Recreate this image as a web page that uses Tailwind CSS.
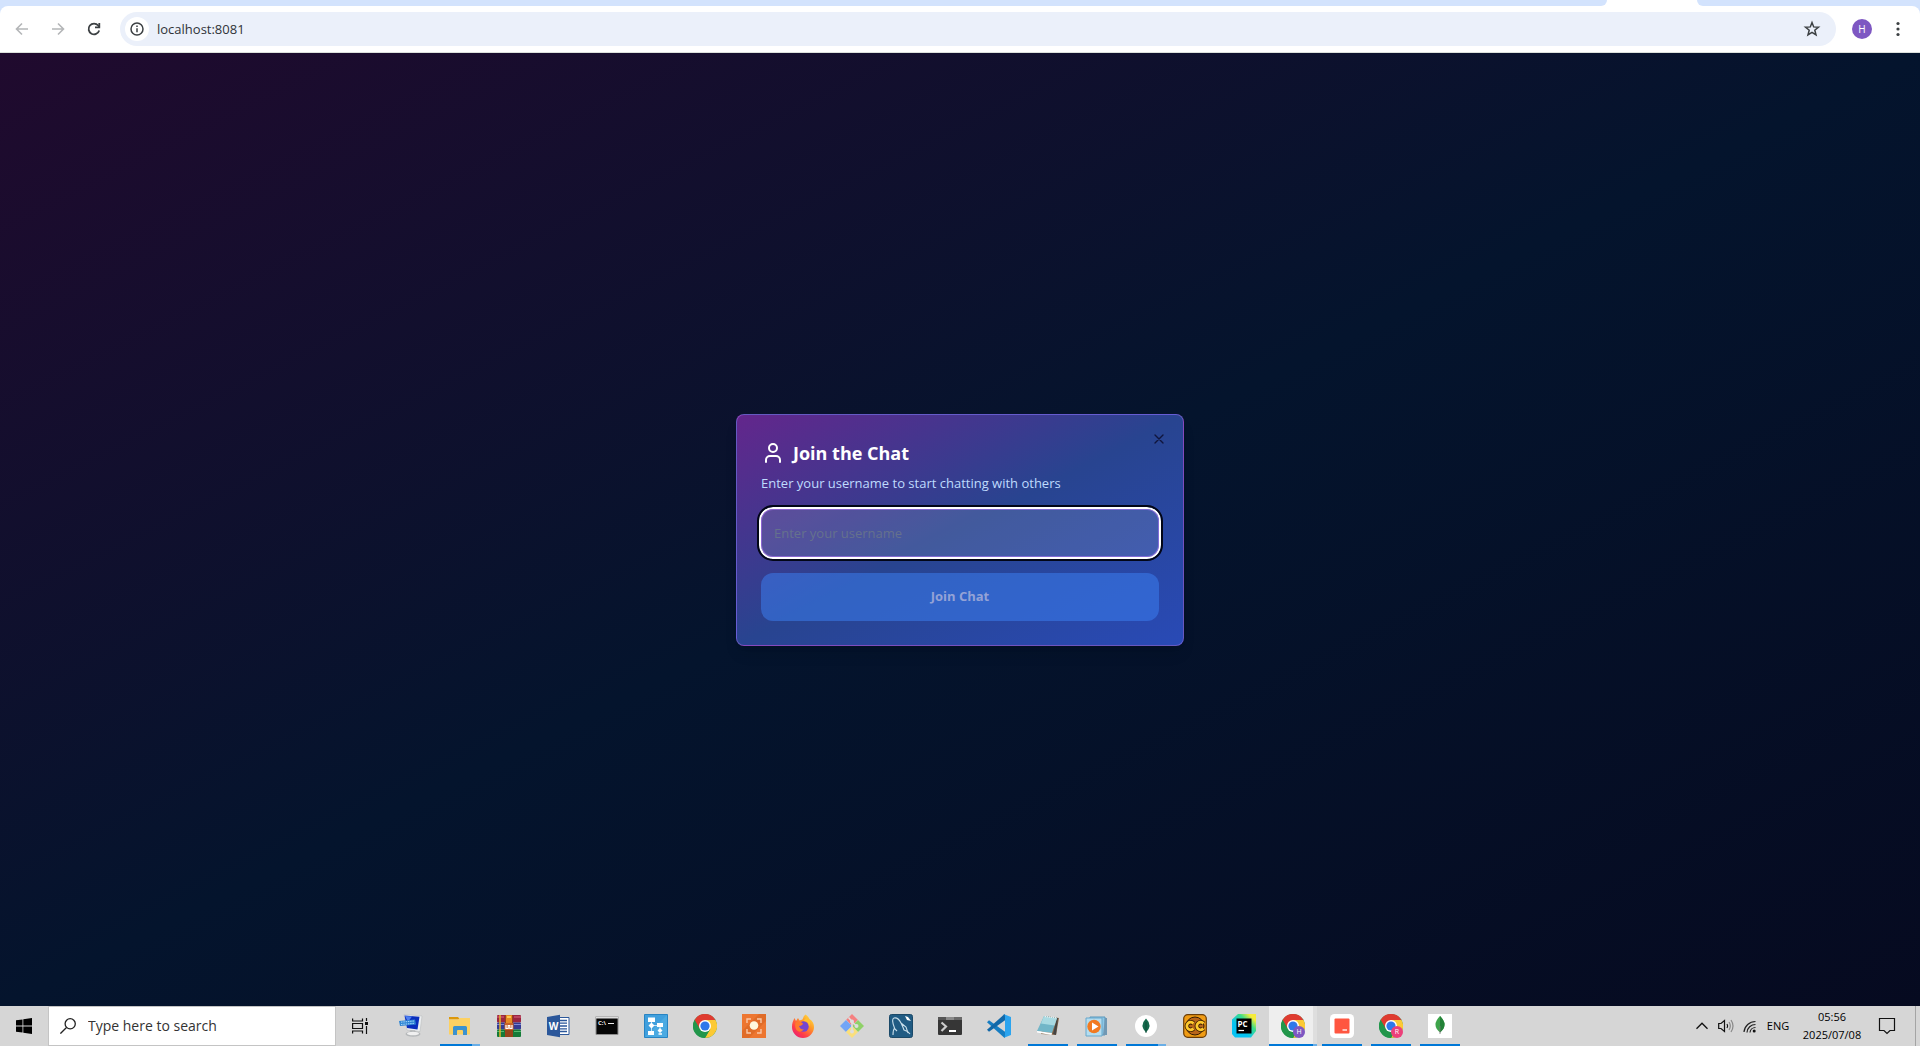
<!DOCTYPE html>
<html lang="en" class="h-full overflow-hidden">
<head>
<meta charset="utf-8">
<meta name="viewport" content="width=device-width, initial-scale=1">
<title>Join the Chat</title>
<script src="https://cdn.jsdelivr.net/npm/@tailwindcss/browser@4"></script>
</head>
<body class="flex h-full flex-col overflow-hidden bg-white font-['Segoe_UI','Open_Sans',sans-serif]">

<!-- Shared symbols -->
<svg class="hidden" aria-hidden="true">
  <symbol id="chrome" viewBox="0 0 24 24">
    <circle cx="12" cy="12" r="12" fill="#1e9d50"/>
    <path d="M12 12 1.6 6A12 12 0 0 1 22.4 6Z" fill="#df3b30"/>
    <path d="M12 6h10.4A12 12 0 0 1 12 24l5.2-9Z" fill="#fcc934"/>
    <path d="M1.6 6 6.8 15 12 12V6Z" fill="#df3b30"/>
    <path d="M1.6 6A12 12 0 0 0 12 24l5.2-9L12 12 6.8 15Z" fill="#22964b"/>
    <circle cx="12" cy="12" r="6" fill="#fff"/>
    <circle cx="12" cy="12" r="4.6" fill="#2f78ea"/>
  </symbol>
</svg>

<!-- Browser chrome -->
<header class="shrink-0 bg-[#d3e3fd] pt-[6px]">
  <nav class="relative flex h-[47px] items-center rounded-t-lg border-b border-[#dce1dc] bg-white pr-3 pl-3">
    <div class="absolute -top-[6px] right-[215px] flex h-[6px] w-[106px] justify-between bg-white">
      <span class="h-full w-2 rounded-br-lg bg-[#d3e3fd]"></span>
      <span class="h-full w-2 rounded-bl-lg bg-[#d3e3fd]"></span>
    </div>
    <button aria-label="Back" class="flex size-5 items-center justify-center text-[#b4b6b8]">
      <svg class="size-5" viewBox="0 0 20 20" fill="none" stroke="currentColor" stroke-width="1.6"><path d="M16 10H5M10 4.500 4.500 10l5.500 5.500"/></svg>
    </button>
    <button aria-label="Forward" class="ml-4 flex size-5 items-center justify-center text-[#b4b6b8]">
      <svg class="size-5" viewBox="0 0 20 20" fill="none" stroke="currentColor" stroke-width="1.6"><path d="M4 10h11M10 4.500l5.500 5.500-5.500 5.500"/></svg>
    </button>
    <button aria-label="Reload" class="ml-4 flex size-5 items-center justify-center text-[#3c4043]">
      <svg class="size-5" viewBox="0 0 20 20" fill="none" stroke="currentColor" stroke-width="1.8"><path d="M15.200 11.500A5.400 5.400 0 1 1 14.200 6.500L15.500 8"/><path d="M15.300 4v4.300H11"/></svg>
    </button>
    <div class="ml-4 flex h-[34px] flex-1 items-center rounded-full bg-[#ebf0fa] pr-[14px] pl-[5px]">
      <button aria-label="Site information" class="flex size-6 items-center justify-center rounded-full bg-white text-[#3c4043]">
        <svg class="size-4" viewBox="0 0 16 16" fill="none" stroke="currentColor" stroke-width="1.5"><circle cx="8" cy="8" r="6"/><path d="M8 7.300V11.300M8 4.500v1.600"/></svg>
      </button>
      <input aria-label="Address" value="localhost:8081" class="ml-2 h-6 min-w-0 flex-1 bg-transparent text-[13px] text-[#303338] outline-none">
      <button aria-label="Bookmark" class="flex size-5 items-center justify-center text-[#3c4043]">
        <svg class="size-5" viewBox="0 0 20 20" fill="none" stroke="currentColor" stroke-width="1.500"><path d="m10 3.500 1.700 4.400 4.800.3-3.700 3 1.200 4.700-4-2.600-4 2.600 1.200-4.700-3.700-3 4.800-.3Z"/></svg>
      </button>
    </div>
    <button aria-label="Profile" class="ml-4 size-5 rounded-full bg-[#7e57c2] text-center text-[10px] leading-5 text-white">H</button>
    <button aria-label="Menu" class="ml-4 flex size-5 items-center justify-center text-[#3c4043]">
      <svg class="size-5" viewBox="0 0 20 20" fill="currentColor"><circle cx="10" cy="4.500" r="1.600"/><circle cx="10" cy="10" r="1.600"/><circle cx="10" cy="15.500" r="1.600"/></svg>
    </button>
  </nav>
</header>

<!-- Chat page -->
<main class="flex min-h-0 flex-1 items-center justify-center bg-linear-to-br/srgb from-[#200a2e] via-[#04142d] to-[#060a20] p-4">
  <section role="dialog" aria-labelledby="title" aria-describedby="desc" class="relative w-full max-w-md rounded-lg border border-purple-400/40 bg-linear-to-br/srgb from-[#63268c] via-[#284490] to-[#294ab6] p-6 shadow-lg">
    <h2 id="title" class="flex h-7 items-center gap-2 text-lg font-bold text-white">
      <svg class="size-6" viewBox="0 0 24 24" fill="none" stroke="currentColor" stroke-width="2" stroke-linecap="round" stroke-linejoin="round"><path d="M19 21v-2a4 4 0 0 0-4-4H9a4 4 0 0 0-4 4v2"/><circle cx="12" cy="7" r="4"/></svg>
      Join the Chat
    </h2>
    <p id="desc" class="mt-[6px] text-[13px] leading-5 text-[#bfdbfe]">Enter your username to start chatting with others</p>
    <form class="mt-4 flex flex-col gap-4">
      <input aria-label="Username" placeholder="Enter your username" class="h-12 w-full rounded-xl border border-purple-400/50 bg-white/12 px-3 text-[13px] text-white ring-2 ring-white outline-2 outline-offset-2 outline-[#020617] placeholder:text-[#65718d]">
      <button type="button" disabled class="h-12 w-full rounded-xl bg-[#3b82f6]/50 text-[13px] font-bold text-[#94a2d6]">Join Chat</button>
    </form>
    <button aria-label="Close" class="absolute top-4 right-4 text-[#10153c]">
      <svg class="size-4" viewBox="0 0 24 24" fill="none" stroke="currentColor" stroke-width="2" stroke-linecap="round"><path d="M18 6 6 18M6 6l12 12"/></svg>
    </button>
  </section>
</main>

<!-- Taskbar -->
<footer class="flex h-10 shrink-0 items-stretch overflow-hidden bg-[#d6d6d6] text-black">
  <button aria-label="Start" class="flex w-12 items-center justify-center">
    <svg class="size-4" viewBox="0 0 16 16"><path d="M0 2.300 6.500 1.400V7.600H0ZM7.300 1.300 16 0V7.600H7.300ZM0 8.400h6.500v6.200L0 13.700ZM7.300 8.400H16V16L7.300 14.700Z"/></svg>
  </button>
  <label class="flex w-[288px] items-center gap-3 border border-[#c4c4c4] bg-white pl-[11px]">
    <svg class="size-4" viewBox="0 0 16 16" fill="none" stroke="#222" stroke-width="1.300"><circle cx="10.200" cy="5.800" r="5.100"/><path d="M6.500 9.500.400 15.600"/></svg>
    <input aria-label="Search" placeholder="Type here to search" class="min-w-0 flex-1 bg-transparent text-sm outline-none placeholder:text-[#333]">
  </label>
  <button aria-label="Task view" class="flex w-12 items-center justify-center">
    <svg class="size-4" viewBox="0 0 16 16" fill="none" stroke="#111" stroke-width="1.200"><path d="M.600.500V3H10.500V.500M.600 5.500h9.900v5H.600ZM.600 15.500V13H10.500v2.500M14.500 0v3M14.500 8v8"/><path d="M13 4h3v3h-3Z" fill="#111" stroke="none"/></svg>
  </button>

  <div class="ml-[3px] flex gap-px">
    <button aria-label="On-screen keyboard" class="flex w-12 items-center justify-center">
      <svg class="size-6" viewBox="0 0 24 24"><path d="M5 .500 23 2 21 17.500 8 16Z" fill="#eceef0" stroke="#b5b8bb" stroke-width=".5"/><path d="M5.500 1.500 20.500 2.800 18.500 15.500 8 14Z" fill="#0b2fbd"/><path d="M6 2 13 2.500 9 8Z" fill="#4d7ff0"/><path d="M11 16.500h5l1 3h-5Z" fill="#aaadb0"/><ellipse cx="14" cy="20" rx="7.500" ry="2.800" fill="#b5b8ba"/><ellipse cx="14" cy="19.500" rx="6" ry="1.700" fill="#f0f0f0"/><path d="M0 7 16 5.500 17 10.500 1 12Z" fill="#2f86d4"/><path d="M2 8.200 15 7M2 10.500 15.500 9.300" stroke="#a5d5fa" stroke-width="1" stroke-dasharray="1.500 .8"/></svg>
    </button>
    <button aria-label="File Explorer" class="relative flex w-12 items-center justify-center">
      <svg class="size-6" viewBox="0 0 24 24"><path d="M1 3h9l2 2.500H1Z" fill="#dc980c"/><path d="M1 5.500h9l2-1.500h10v16.500H1Z" fill="#fdd162"/><path d="M5 21v-7.500q0-1.500 1.500-1.500h11q1.500 0 1.500 1.500V21h-4v-4q0-1-1-1h-4q-1 0-1 1v4Z" fill="#3c92cf"/></svg>
      <span class="absolute bottom-0 left-1 flex h-[2px] w-10 bg-[#0078d7]"><span class="ml-auto w-2 bg-[#6aaee6]"></span></span>
    </button>
    <button aria-label="WinRAR" class="flex w-12 items-center justify-center">
      <svg class="size-6" viewBox="0 0 24 24"><rect y="1" width="24" height="7.500" rx="1" fill="#9b2540"/><rect y="8.500" width="24" height="7" rx="1" fill="#343b94"/><rect y="15.500" width="24" height="7.500" rx="1" fill="#157a38"/><path d="M0 3h7M17 3h7" stroke="#db657c"/><path d="M0 10.500h7M17 10.500h7" stroke="#7f89d5"/><path d="M0 17.500h7M17 17.500h7" stroke="#56bb71"/><path d="M3 1v22" stroke="#e4b32b" stroke-width="1.500"/><path d="M8 1h8v22H8Z" fill="#97431a"/><path d="M9 1h6v8H9Z" fill="#e68a24"/><path d="M10 2h4v2h-4Z" fill="#ffc84c"/><path d="M7.500 9h9v7h-9Z" fill="#ca6328"/><path d="M9 11v3.500h2.200V11.500h1.600v3H15V11" fill="none" stroke="#fff" stroke-width="1.200"/></svg>
    </button>
    <button aria-label="Word" class="flex w-12 items-center justify-center">
      <svg class="size-6" viewBox="0 0 24 24"><path d="M12 3.500h11v17H12Z" fill="#fff" stroke="#2b579a"/><path d="M14 6.500h7M14 9.200h7M14 12h7M14 14.800h7M14 17.500h7" stroke="#2b579a" stroke-width="1.300"/><path d="M1 3 14 .800v22.400L1 21Z" fill="#2b579a"/><text x="7.500" y="15.500" text-anchor="middle" font-size="10" font-weight="700" fill="#fff">W</text></svg>
    </button>
    <button aria-label="Command Prompt" class="flex w-12 items-center justify-center">
      <svg class="size-6" viewBox="0 0 24 24"><path d="M1 2.500h22v18H1Z" fill="#060606" stroke="#8d8d8d"/><path d="M1 2.500h22v2H1Z" fill="#ddd"/><text x="3" y="11" font-size="6" font-weight="700" fill="#eee">C:\</text><path d="M13 9.500h6" stroke="#eee"/></svg>
    </button>
    <button aria-label="Diagram tool" class="flex w-12 items-center justify-center">
      <svg class="size-6" viewBox="0 0 24 24"><path d="M.500.500h23v23H.500Z" fill="#409fdd" stroke="#2884c3"/><path d="M23 1v22H1Z" fill="#5dbbeb" opacity=".4"/><path d="M4 3.500h7v4.500H4ZM13 9h6v4h-6ZM4 17h6v4H4Z" fill="#fff"/><path d="m7.500 8.500 3 3-3 3-3-3ZM16 14l2.500 2.500L16 19l-2.500-2.500Z" fill="#fff"/><path d="M7.500 8v9M10 11.500h3M16 13v2" stroke="#fff" stroke-width=".7"/><path d="M14.500 20h3.500" stroke="#fff" stroke-width="1.500"/></svg>
    </button>
    <button aria-label="Chrome" class="flex w-12 items-center justify-center"><svg class="size-6"><use href="#chrome"/></svg></button>
    <button aria-label="Screen capture" class="flex w-12 items-center justify-center">
      <svg class="size-6" viewBox="0 0 24 24"><path d="M0 0h24v24H0Z" fill="#ed7630"/><path d="M0 17 17 0h7v7L7 24H0Z" fill="#d66423" opacity=".55"/><path d="M5 9V5h4M15 5h4v4M19 15v4h-4M9 19H5v-4" fill="none" stroke="#f9c7a6" stroke-width="1.400"/><circle cx="12" cy="11.500" r="4.300" fill="#fff9dd"/></svg>
    </button>
    <button aria-label="Firefox" class="flex w-12 items-center justify-center">
      <svg class="size-6" viewBox="0 0 24 24"><defs><linearGradient id="ff" x1="1" y1="0" x2=".2" y2="1"><stop stop-color="#fff34d"/><stop offset=".4" stop-color="#ff9a28"/><stop offset=".75" stop-color="#ff3f47"/><stop offset="1" stop-color="#e91e73"/></linearGradient></defs><path d="M14.500.500c3 2 3.500 3.500 4 4.500 3.500 2 4.500 5 4.500 8A11 11 0 0 1 1 13c0-4 1.200-6.500 2.500-9l1.500 3 2-3 1.500 2.500 3-1C12.500 3 13 1.500 14.500.500Z" fill="url(#ff)"/><circle cx="12.500" cy="12.500" r="5.200" fill="#7545d1"/><path d="M4.500 8.500q5-2 7.500 1-.5 2-4 2.500 1.500 4 5 3.500-4 4-7.500.5Q3.500 13 4.500 8.500Z" fill="#ff7a2c"/><path d="M12 7q6-1 6 6 3-6-2.500-9Z" fill="#ffc22f"/></svg>
    </button>
    <button aria-label="Git" class="flex w-12 items-center justify-center">
      <svg class="size-6" viewBox="0 0 24 24"><path d="m12 0 5.800 5.800L12 12 6.200 5.800Z" fill="#f58080"/><path d="m0 12 6-6 6 6-6 6Z" fill="#72a5f6"/><path d="m12 12 6-6 6 6-6 6Z" fill="#8fd168"/><path d="m12 12 6 6-6 6-6-6Z" fill="#fadf7c"/><path d="m8.500 3.500 3.500 4v11M12 8l4.500 4" stroke="#dedede" stroke-width="1.600" fill="none"/><g fill="#dedede"><circle cx="12" cy="7.500" r="2"/><circle cx="16.500" cy="12" r="2"/><circle cx="12" cy="17.500" r="2"/></g></svg>
    </button>
    <button aria-label="MySQL Workbench" class="flex w-12 items-center justify-center">
      <svg class="size-6" viewBox="0 0 24 24"><rect x=".500" y=".500" width="23" height="23" rx="2" fill="#205b83" stroke="#1b4968"/><path d="M4 21q0-5 1.500-7Q2 5 5 4q4-1 7 5 2 4 3 7 4 1 6 4M5 14l3 3M12 9l5 4 2 6" fill="none" stroke="#c9dfeb" stroke-width="1.100"/><path d="m16 2 3 1 3 4-4-1Z" fill="#fff"/></svg>
    </button>
    <button aria-label="Terminal" class="flex w-12 items-center justify-center">
      <svg class="size-6" viewBox="0 0 24 24"><rect y="3" width="24" height="18" rx="1" fill="#363636"/><path d="M0 3h8v3H0Z" fill="#555"/><path d="M8 3h8v3H8Z" fill="#8a8a8a"/><path d="M16 3h8v3h-8Z" fill="#696969"/><path d="m3.500 8.500 4.500 4-4.500 4.500" fill="none" stroke="#ccc" stroke-width="2.200"/><path d="M11 17h7" stroke="#fff" stroke-width="2"/></svg>
    </button>
    <button aria-label="Visual Studio Code" class="flex w-12 items-center justify-center">
      <svg class="size-6" viewBox="0 0 24 24"><path d="m0 8.200 2-2L18 17.800V24L17 23.500Z" fill="#167dc2"/><path d="m0 15.800 2 2L18 6.200V0L17 .500Z" fill="#1268a8"/><path d="M17 .300 24 3v18l-7 2.700q1-.5 1-2.700V3q0-2-1-2.700Z" fill="#2ba4ef"/></svg>
    </button>
    <button aria-label="Notepad" class="relative flex w-12 items-center justify-center">
      <svg class="size-6" viewBox="0 0 24 24"><path d="M9 2 23 4 20 21 5 20Z" fill="#88694a"/><path d="M22 4 20 21 17 20 21 4Z" fill="#444"/><path d="M8 2 21 4 16 19 1 17Z" fill="#72b6c8"/><path d="M8 2 21 4 18.500 11.500 5 9.500Z" fill="#a9dae2"/><path d="m1 17 15 2-.5 2L1 18.500Z" fill="#fff"/><path d="M9 2.500 21 4" stroke="#eee" stroke-width="1.500" stroke-dasharray="1 1"/></svg>
      <span class="absolute bottom-0 left-1 h-[2px] w-10 bg-[#0078d7]"></span>
    </button>
    <button aria-label="Media Player" class="relative flex w-12 items-center justify-center">
      <svg class="size-6" viewBox="0 0 24 24"><path d="M5 3h15v18H5Z" fill="#8fc7e5" stroke="#5896bb"/><path d="M20 4h2v17h-4Z" fill="#7098b4"/><path d="M1 4h16v18H1Z" fill="#b4ddf0" stroke="#68a8cc"/><circle cx="9" cy="12.500" r="6.700" fill="#f27a20"/><path d="m7 8.500 6.500 4-6.500 4Z" fill="#fff"/></svg>
      <span class="absolute bottom-0 left-1 h-[2px] w-10 bg-[#0078d7]"></span>
    </button>
    <button aria-label="MongoDB Compass" class="relative flex w-12 items-center justify-center">
      <svg class="size-6" viewBox="0 0 24 24"><circle cx="12" cy="12" r="11" fill="#fff"/><path d="M12 4.500q7 7 0 14-7-7 0-14Z" fill="#14694c"/><path d="M12 8v11" stroke="#0a4734" stroke-width=".8"/></svg>
      <span class="absolute bottom-0 left-1 flex h-[2px] w-10 bg-[#0078d7]"><span class="ml-auto w-2 bg-[#6aaee6]"></span></span>
    </button>
    <button aria-label="CC" class="flex w-12 items-center justify-center">
      <svg class="size-6" viewBox="0 0 24 24"><rect x=".700" y=".700" width="22.600" height="22.600" rx="4" fill="#f09c14" stroke="#6b3d08" stroke-width="1.200"/><circle cx="12" cy="12" r="9" fill="#b8651a" stroke="#301a06"/><path d="M10.500 9.500a3.800 3.800 0 1 0 0 5M20.500 9.500a3.800 3.800 0 1 0 0 5" fill="none" stroke="#3b1e02" stroke-width="4.500"/><path d="M10.500 9.500a3.800 3.800 0 1 0 0 5M20.500 9.500a3.800 3.800 0 1 0 0 5" fill="none" stroke="#ffc92c" stroke-width="2.800"/></svg>
    </button>
    <button aria-label="PyCharm" class="flex w-12 items-center justify-center">
      <svg class="size-6" viewBox="0 0 24 24"><defs><linearGradient id="pc" x1="0" y1="1" x2="1" y2="0"><stop offset=".35" stop-color="#07c3f2"/><stop offset=".65" stop-color="#3ddc88"/><stop offset=".85" stop-color="#f6eb3c"/></linearGradient></defs><path d="M0 5.500 6 0h18v17l-5 6.500H3L0 20Z" fill="url(#pc)"/><path d="M4.500 4.500h15v15h-15Z"/><text x="5.500" y="12.500" font-size="8" font-weight="700" fill="#fff">PC</text><path d="M6.500 16.500H12" stroke="#fff" stroke-width="1.200"/></svg>
    </button>
    <button aria-label="Chrome, profile H" class="relative flex w-12 items-center justify-center border-r-4 border-[#dedede] bg-[#eeeeee] pl-1">
      <svg class="size-6"><use href="#chrome"/></svg>
      <span class="absolute top-5 left-6 size-3 rounded-full bg-[#7e57c2] text-center text-[7px] leading-3 text-white">H</span>
      <span class="absolute bottom-0 left-0 flex h-[2px] w-12 bg-[#0078d7]"><span class="ml-auto w-1 bg-[#6aaee6]"></span></span>
    </button>
    <button aria-label="Red app" class="relative flex w-12 items-center justify-center">
      <svg class="size-6" viewBox="0 0 24 24"><rect width="24" height="24" rx="4.500" fill="#fff"/><rect x="4.500" y="4.500" width="15" height="15" rx="1" fill="#ff5640"/><path d="M12.500 16h4.500" stroke="#fff" stroke-width="1.300"/></svg>
      <span class="absolute bottom-0 left-1 h-[2px] w-10 bg-[#0078d7]"></span>
    </button>
    <button aria-label="Chrome, profile R" class="relative flex w-12 items-center justify-center">
      <svg class="size-6"><use href="#chrome"/></svg>
      <span class="absolute top-5 left-6 size-3 rounded-full bg-[#ec407a] text-center text-[7px] leading-3 text-white">R</span>
      <span class="absolute bottom-0 left-1 h-[2px] w-10 bg-[#0078d7]"></span>
    </button>
    <button aria-label="MongoDB" class="relative flex w-12 items-center justify-center">
      <svg class="size-6" viewBox="0 0 24 24"><path d="M0 0h24v24H0Z" fill="#fff"/><path d="M12 2q9 9 0 16.500Q3 11 12 2Z" fill="#3da44a"/><path d="M12 2q9 9 0 16.500Z" fill="#238238"/><path d="M12 12v8" stroke="#777" stroke-width=".8"/></svg>
      <span class="absolute bottom-0 left-1 h-[2px] w-10 bg-[#0078d7]"></span>
    </button>
  </div>

  <div class="ml-auto flex items-center">
    <button aria-label="Show hidden icons" class="flex w-6 justify-center"><svg class="size-4" viewBox="0 0 16 16" fill="none" stroke="#111" stroke-width="1.300"><path d="m2.500 10.700 5.500-5.500 5.500 5.500"/></svg></button>
    <button aria-label="Volume" class="flex w-6 justify-center"><svg class="size-4" viewBox="0 0 16 16" fill="none" stroke="#111" stroke-width="1.200"><path d="M.700 5.500H3L6.500 2.500v11L3 10.500H.700Z"/><path d="M9 6q1.300 2 0 4"/><path d="M11 4q2.600 4 0 8M13 2q4 6 0 12" stroke="#888"/></svg></button>
    <button aria-label="Network" class="flex w-6 justify-center"><svg class="size-4" viewBox="0 0 16 16" fill="none" stroke="#222" stroke-width="1.200"><path d="M2 14A11.500 11.500 0 0 1 13.500 3.500M5 14.500a8.500 8.500 0 0 1 8.500-8M8 14.500a5.500 5.500 0 0 1 5.500-5"/><circle cx="12.200" cy="13" r="1.500" fill="#111" stroke="none"/></svg></button>
    <button class="w-8 text-center text-[11px]">ENG</button>
    <time datetime="2025-07-08T05:56" class="w-[76px] text-center text-[11px] leading-[18px]">05:56<br>2025/07/08</time>
    <button aria-label="Notifications" class="flex w-[34px] justify-center"><svg class="size-[18px]" viewBox="0 0 18 18" fill="none" stroke="#111" stroke-width="1.200"><path d="M1.500 1.500h15v12H12l-3 3-3-3H1.500Z"/></svg></button>
    <button aria-label="Show desktop" class="ml-[11px] h-10 w-[5px] border-l border-[#a4a4a4]"></button>
  </div>
</footer>
</body>
</html>
